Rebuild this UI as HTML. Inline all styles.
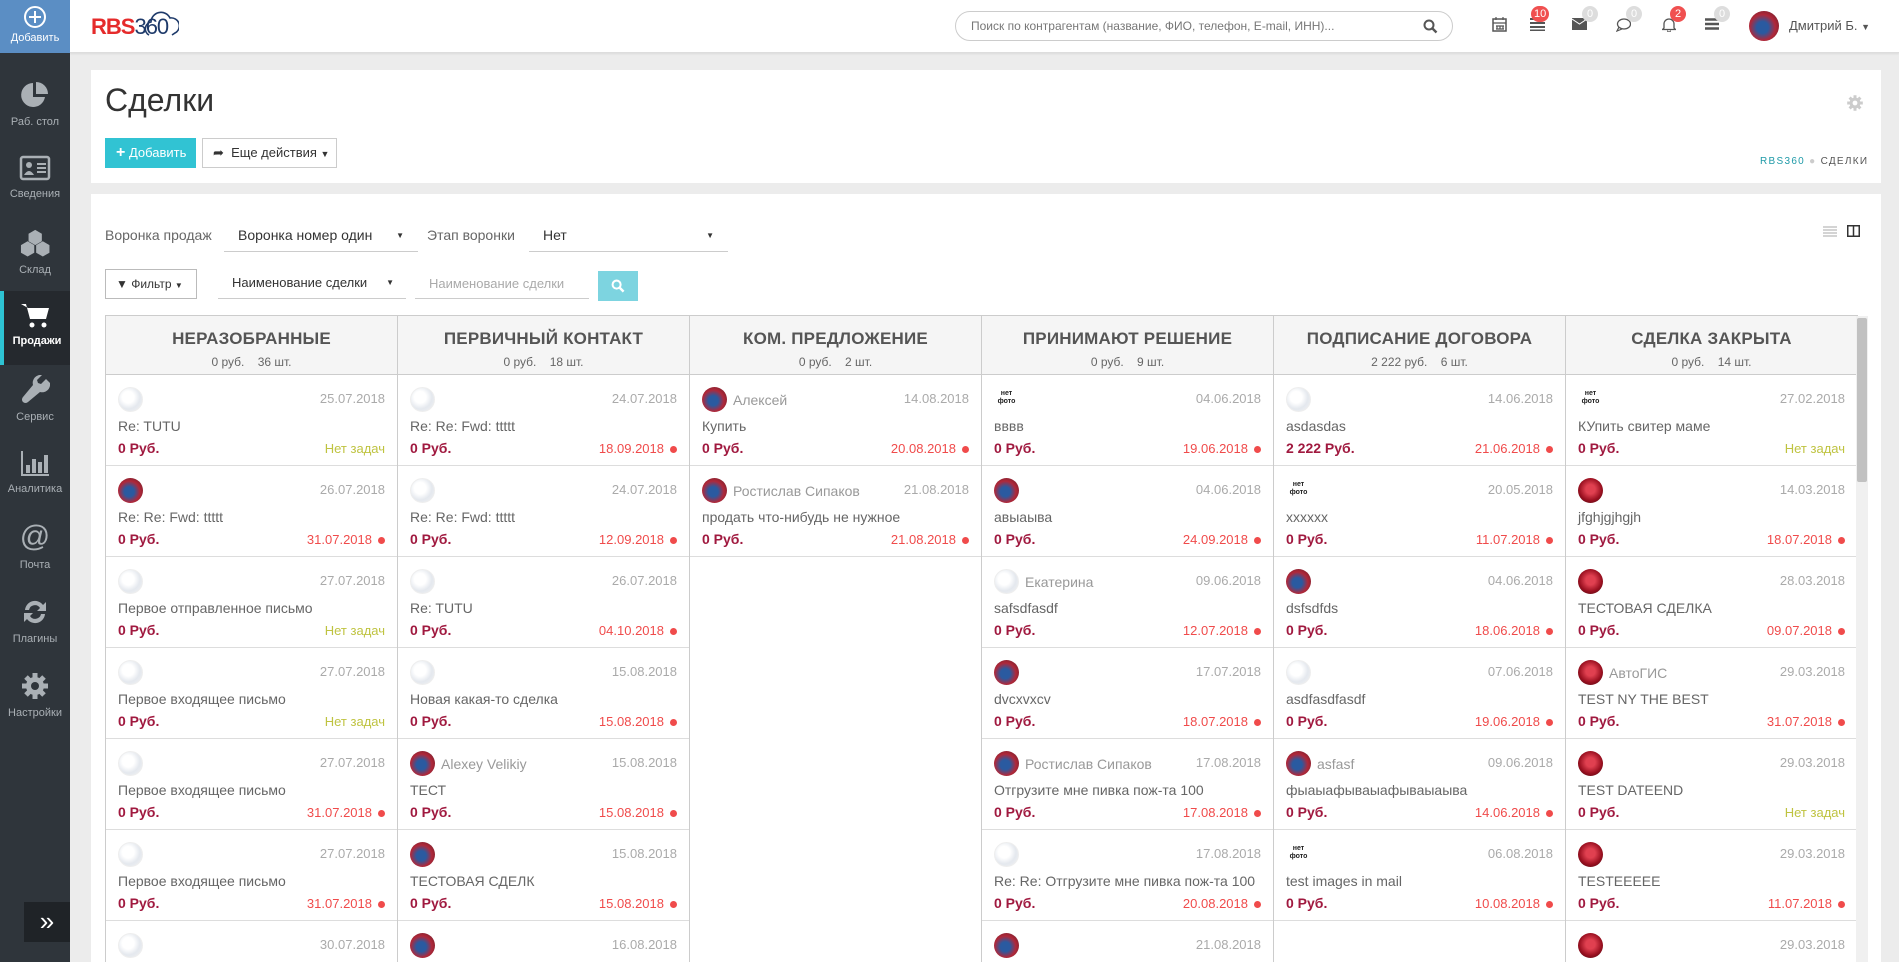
<!DOCTYPE html>
<html><head><meta charset="utf-8">
<style>
*{box-sizing:border-box;margin:0;padding:0}
html,body{width:1899px;height:962px;overflow:hidden}
body{background:#ececec;font-family:"Liberation Sans",sans-serif;color:#555;position:relative}
#wrap{position:absolute;left:0;top:0;width:1899px;height:962px;overflow:hidden}
.side{position:absolute;left:0;top:0;width:70px;height:962px;background:#2f353b;z-index:2}
.addb{position:absolute;left:0;top:0;width:70px;height:53px;background:#5b8ec4;color:#fff;text-align:center;font-size:11px}
.si{position:absolute;left:0;width:70px;height:74px;text-align:center;color:#aab0b5;font-size:11px}
.si svg{display:block;margin:10px auto 6px}
.si.act{background:#25292e;color:#fff;font-weight:bold;border-left:4px solid #2ec3d3}
.top{position:absolute;left:70px;top:0;right:0;height:53px;background:#fff;border-bottom:1px solid #ddd;box-shadow:0 1px 2px rgba(0,0,0,.08)}
.card1{position:absolute;left:91px;top:70px;width:1790px;height:113px;background:#fff}
.card2{position:absolute;left:91px;top:194px;width:1790px;height:768px;background:#fff}
.abs{position:absolute}
.btn{position:absolute;height:30px;font-size:13px;line-height:28px}
.col{position:absolute;top:315px;width:292px;height:647px;border-left:1px solid #ccc;overflow:hidden}
.hd{height:60px;background:#f5f5f5;border-bottom:1px solid #ccc;border-top:1px solid #ccc;text-align:center}
.hd b{display:block;font-size:17px;color:#555;padding-top:13px;letter-spacing:.2px}
.hd span{display:block;font-size:12px;color:#666;margin-top:6px}
.cd{position:relative;height:91px;border-bottom:1px solid #ddd}
.av{position:absolute;left:12px;top:12px;width:25px;height:25px;border-radius:50%}
.ph{background:radial-gradient(circle at 40% 40%,#fff 30%,#e4e8ee 60%,#f3f3f3);border:1px solid #eee}
.pho{background:radial-gradient(circle at 45% 55%,#2a5aa0 25%,#b0283a 55%,#5a1a22)}
.phr{background:radial-gradient(circle at 50% 45%,#e04050 25%,#9a1020 60%,#3a0a10)}
.nf{font-size:7px;font-weight:bold;color:#222;line-height:8px;text-align:center;padding-top:3px;border-radius:0}
.nm{position:absolute;left:43px;top:17px;font-size:14px;color:#999}
.dt{position:absolute;right:12px;top:16px;font-size:13px;color:#aaa}
.tt{position:absolute;left:12px;top:43px;font-size:14px;color:#666}
.pr{position:absolute;left:12px;top:65px;font-size:14px;color:#a0193f;font-weight:bold}
.st{position:absolute;right:12px;top:66px;font-size:13px;color:#f04b4b}
.st.red::after{content:"";display:inline-block;width:7px;height:7px;border-radius:50%;background:#f04b4b;margin-left:6px}
.st.nz{color:#bfc340}
.badge{position:absolute;top:6px;min-width:16px;height:16px;border-radius:8px;font-size:11px;color:#fff;text-align:center;line-height:16px;padding:0 3px}
</style></head><body><div id="wrap">

<div class="side">
 <div class="addb"><svg width="24" height="24" viewBox="0 0 24 24" style="margin-top:5px"><circle cx="12" cy="12" r="10" fill="none" stroke="#fff" stroke-width="2"/><path d="M12 6v12M6 12h12" stroke="#fff" stroke-width="2"/></svg><div>Добавить</div></div>
 <div class="si" style="top:70px"><svg width="30" height="30" viewBox="0 0 30 30"><path d="M13 3A12 12 0 1 0 25 17H13z" fill="#aab0b5"/><path d="M16 2v12h12A12 12 0 0 0 16 2z" fill="#aab0b5"/></svg>Раб. стол</div>
 <div class="si" style="top:144px"><svg width="32" height="28" viewBox="0 0 32 28"><rect x="2" y="3" width="28" height="22" rx="2" fill="none" stroke="#aab0b5" stroke-width="2.5"/><circle cx="10" cy="11" r="3" fill="#aab0b5"/><path d="M5 21q5-8 10 0z" fill="#aab0b5"/><path d="M18 10h9M18 14h9M18 18h9" stroke="#aab0b5" stroke-width="2"/></svg>Сведения</div>
 <div class="si" style="top:218px"><svg width="30" height="30" viewBox="0 0 30 30"><path d="M15 2l7 4v8l-7 4-7-4V6z M7 14l7 4v8l-7 4-7-4v-8z M23 14l7 4v8l-7 4-7-4v-8z" fill="#aab0b5" transform="scale(.95) translate(1,0)"/></svg>Склад</div>
 <div class="si act" style="top:291px"><svg width="30" height="28" viewBox="0 0 30 28" style="margin-left:16px"><path d="M1 3h5l4 15h16l3-11H8" fill="#fff"/><circle cx="12" cy="24" r="2.5" fill="#fff"/><circle cx="24" cy="24" r="2.5" fill="#fff"/></svg>Продажи</div>
 <div class="si" style="top:365px"><svg width="30" height="30" viewBox="0 0 30 30"><path d="M26 4l-5 5-3-1-1-3 5-5a8 8 0 0 0-9 10L3 22a3 3 0 0 0 5 5l12-10a8 8 0 0 0 10-9z" fill="#aab0b5"/></svg>Сервис</div>
 <div class="si" style="top:439px"><svg width="30" height="28" viewBox="0 0 30 28"><path d="M2 2v24h27" stroke="#aab0b5" stroke-width="2" fill="none"/><rect x="6" y="16" width="4" height="8" fill="#aab0b5"/><rect x="12" y="10" width="4" height="14" fill="#aab0b5"/><rect x="18" y="13" width="4" height="11" fill="#aab0b5"/><rect x="24" y="6" width="4" height="18" fill="#aab0b5"/></svg>Аналитика</div>
 <div class="si" style="top:513px"><div style="font-size:30px;color:#aab0b5;height:36px;margin-top:6px;line-height:36px">@</div><div style="margin-top:4px">Почта</div></div>
 <div class="si" style="top:587px"><svg width="30" height="30" viewBox="0 0 30 30"><path d="M5 13A10 10 0 0 1 23 8l3-3v9h-9l3-3A6 6 0 0 0 9 13z M25 17A10 10 0 0 1 7 22l-3 3v-9h9l-3 3a6 6 0 0 0 11-2z" fill="#aab0b5"/></svg>Плагины</div>
 <div class="si" style="top:661px"><svg width="30" height="30" viewBox="0 0 30 30"><circle cx="15" cy="15" r="9" fill="#aab0b5"/><g stroke="#aab0b5" stroke-width="5"><path d="M15 2v26M2 15h26M6 6l18 18M24 6L6 24"/></g><circle cx="15" cy="15" r="4" fill="#2f353b"/></svg>Настройки</div>
 <div class="abs" style="left:24px;top:902px;width:46px;height:40px;background:#1f2327;color:#fff;font-size:26px;text-align:center;line-height:38px">»</div>
</div>

<div class="top">
 <div class="abs" style="left:21px;top:14px;font-size:22px;font-weight:bold;color:#e52b2b;letter-spacing:-1px">RBS<span style="color:#1e3a6a;font-weight:normal">360</span></div>
 <svg class="abs" style="left:75px;top:9px" width="34" height="28" viewBox="0 0 34 28"><path d="M4 26A7 7 0 0 1 6 13a10 10 0 0 1 19-4 8 8 0 0 1 5 15l-3 2" fill="none" stroke="#1e3a6a" stroke-width="1.6"/></svg>
 <div class="abs" style="left:885px;top:11px;width:498px;height:30px;border:1px solid #ccc;border-radius:15px;font-size:12px;color:#777;padding:7px 15px">Поиск по контрагентам (название, ФИО, телефон, E-mail, ИНН)...<svg class="abs" style="right:14px;top:7px" width="15" height="15" viewBox="0 0 15 15"><circle cx="6" cy="6" r="4.5" fill="none" stroke="#555" stroke-width="2"/><path d="M9.5 9.5l4 4" stroke="#555" stroke-width="2.4"/></svg></div>
 <svg class="abs" style="left:1422px;top:17px" width="15" height="15" viewBox="0 0 15 15"><rect x="1" y="2" width="13" height="12" fill="none" stroke="#555" stroke-width="1.5"/><path d="M1 6h13M4 9h8M4 12h8M5 9v3M8 9v3M11 9v3M4 0v3M11 0v3" stroke="#555" stroke-width="1.2"/></svg>
 <svg class="abs" style="left:1460px;top:18px" width="15" height="13" viewBox="0 0 15 13"><path d="M0 1h15M0 5h15M0 9h15M0 12.5h15" stroke="#555" stroke-width="2"/></svg>
 <div class="badge" style="left:1461px;background:#f05050">10</div>
 <svg class="abs" style="left:1502px;top:18px" width="15" height="12" viewBox="0 0 15 12"><rect width="15" height="12" fill="#555"/><path d="M0 1l7.5 5L15 1" stroke="#fff" fill="none"/></svg>
 <div class="badge" style="left:1512px;background:#ddd">0</div>
 <svg class="abs" style="left:1546px;top:18px" width="15" height="14" viewBox="0 0 15 14"><ellipse cx="8" cy="6" rx="6.5" ry="5" fill="none" stroke="#555" stroke-width="1.3"/><path d="M3 9l-2 4 5-2" fill="none" stroke="#555" stroke-width="1.2"/></svg>
 <div class="badge" style="left:1556px;background:#ddd">0</div>
 <svg class="abs" style="left:1592px;top:17px" width="14" height="15" viewBox="0 0 14 15"><path d="M2 11V7a5 5 0 0 1 10 0v4l1.5 1.5h-13z" fill="none" stroke="#555" stroke-width="1.3"/><path d="M5.5 13.5a1.5 1.5 0 0 0 3 0" stroke="#555" fill="none"/></svg>
 <div class="badge" style="left:1600px;background:#f05050">2</div>
 <svg class="abs" style="left:1635px;top:18px" width="14" height="12" viewBox="0 0 14 12"><path d="M0 1.5h14M0 6h14M0 10.5h14" stroke="#555" stroke-width="2.5"/></svg>
 <div class="badge" style="left:1644px;background:#ddd">0</div>
 <div class="abs pho" style="left:1679px;top:11px;width:30px;height:30px;border-radius:50%"></div>
 <div class="abs" style="left:1719px;top:18px;font-size:13px;color:#555">Дмитрий Б. <span style="font-size:9px">▼</span></div>
</div>

<div class="card1">
 <div class="abs" style="left:14px;top:12px;font-size:32px;color:#333">Сделки</div>
 <div class="btn" style="left:14px;top:68px;width:91px;background:#31c3d3;color:#fff;padding-left:10px;border:1px solid #31c3d3"><b style="font-size:16px">+</b> Добавить</div>
 <div class="btn" style="left:111px;top:68px;width:135px;border:1px solid #ccc;color:#333;padding-left:10px">➦ &nbsp;Еще действия <span style="font-size:9px">▼</span></div>
 <svg class="abs" style="left:1755px;top:24px" width="18" height="18" viewBox="0 0 30 30"><circle cx="15" cy="15" r="9" fill="#ccc"/><g stroke="#ccc" stroke-width="5"><path d="M15 2v26M2 15h26M6 6l18 18M24 6L6 24"/></g><circle cx="15" cy="15" r="4" fill="#fff"/></svg>
 <div class="abs" style="left:1669px;top:86px;font-size:10px;letter-spacing:1.3px;color:#1f9aa8">RBS360 <span style="color:#ccc">●</span> <span style="color:#555">СДЕЛКИ</span></div>
</div>

<div class="card2">
 <div class="abs" style="left:14px;top:33px;font-size:14px;color:#666">Воронка продаж</div>
 <div class="abs" style="left:133px;top:26px;width:194px;height:32px;border-bottom:1px solid #ccc;font-size:14px;color:#333;padding:7px 14px">Воронка номер один<span style="position:absolute;right:14px;font-size:8px;top:11px">▼</span></div>
 <div class="abs" style="left:336px;top:33px;font-size:14px;color:#666">Этап воронки</div>
 <div class="abs" style="left:438px;top:26px;width:199px;height:32px;border-bottom:1px solid #ccc;font-size:14px;color:#333;padding:7px 14px">Нет<span style="position:absolute;right:14px;font-size:8px;top:11px">▼</span></div>
 <svg class="abs" style="left:1732px;top:32px" width="14" height="11" viewBox="0 0 14 11"><path d="M0 1h14M0 4h14M0 7h14M0 10h14" stroke="#aaa" stroke-width="1"/></svg>
 <svg class="abs" style="left:1756px;top:31px" width="13" height="12" viewBox="0 0 13 12"><rect x=".75" y=".75" width="11.5" height="10.5" fill="none" stroke="#333" stroke-width="1.5"/><path d="M6.5 1v10" stroke="#333" stroke-width="1.5"/></svg>
 <div class="btn" style="left:14px;top:75px;width:92px;border:1px solid #bbb;font-size:12px;color:#333;padding-left:10px"><b>▼</b> Фильтр <span style="font-size:8px">▼</span></div>
 <div class="abs" style="left:127px;top:74px;width:188px;height:31px;border-bottom:1px solid #ccc;font-size:13px;color:#333;padding:7px 14px">Наименование сделки<span style="position:absolute;right:12px;font-size:8px;top:10px">▼</span></div>
 <div class="abs" style="left:324px;top:74px;width:174px;height:31px;border-bottom:1px solid #ccc;font-size:13px;color:#aaa;padding:8px 14px">Наименование сделки</div>
 <div class="abs" style="left:507px;top:77px;width:40px;height:30px;background:#7dd4e0"><svg style="margin:8px 13px" width="14" height="14" viewBox="0 0 15 15"><circle cx="6" cy="6" r="4.3" fill="none" stroke="#fff" stroke-width="2.2"/><path d="M9.5 9.5l4 4" stroke="#fff" stroke-width="2.6"/></svg></div>
</div>

<div id="board"></div>
<div class="abs" style="left:1856px;top:316px;width:12px;height:646px;background:#f0f0f0"></div>
<div class="abs" style="left:1857px;top:318px;width:10px;height:164px;background:#c1c1c1;border-radius:2px"></div>
</div>
<script>
var P='ph',O='pho',R='phr',N='nf';
var cols=[
["НЕРАЗОБРАННЫЕ","0 руб.&nbsp;&nbsp;&nbsp; 36 шт.",[
[P,"","25.07.2018","Re: TUTU","0 Руб.","n"],
[O,"","26.07.2018","Re: Re: Fwd: ttttt","0 Руб.","31.07.2018"],
[P,"","27.07.2018","Первое отправленное письмо","0 Руб.","n"],
[P,"","27.07.2018","Первое входящее письмо","0 Руб.","n"],
[P,"","27.07.2018","Первое входящее письмо","0 Руб.","31.07.2018"],
[P,"","27.07.2018","Первое входящее письмо","0 Руб.","31.07.2018"],
[P,"","30.07.2018","","",""]]],
["ПЕРВИЧНЫЙ КОНТАКТ","0 руб.&nbsp;&nbsp;&nbsp; 18 шт.",[
[P,"","24.07.2018","Re: Re: Fwd: ttttt","0 Руб.","18.09.2018"],
[P,"","24.07.2018","Re: Re: Fwd: ttttt","0 Руб.","12.09.2018"],
[P,"","26.07.2018","Re: TUTU","0 Руб.","04.10.2018"],
[P,"","15.08.2018","Новая какая-то сделка","0 Руб.","15.08.2018"],
[O,"Alexey Velikiy","15.08.2018","ТЕСТ","0 Руб.","15.08.2018"],
[O,"","15.08.2018","ТЕСТОВАЯ СДЕЛК","0 Руб.","15.08.2018"],
[O,"","16.08.2018","","",""]]],
["КОМ. ПРЕДЛОЖЕНИЕ","0 руб.&nbsp;&nbsp;&nbsp; 2 шт.",[
[O,"Алексей","14.08.2018","Купить","0 Руб.","20.08.2018"],
[O,"Ростислав Сипаков","21.08.2018","продать что-нибудь не нужное","0 Руб.","21.08.2018"]]],
["ПРИНИМАЮТ РЕШЕНИЕ","0 руб.&nbsp;&nbsp;&nbsp; 9 шт.",[
[N,"","04.06.2018","вввв","0 Руб.","19.06.2018"],
[O,"","04.06.2018","авыаыва","0 Руб.","24.09.2018"],
[P,"Екатерина","09.06.2018","safsdfasdf","0 Руб.","12.07.2018"],
[O,"","17.07.2018","dvcxvxcv","0 Руб.","18.07.2018"],
[O,"Ростислав Сипаков","17.08.2018","Отгрузите мне пивка пож-та 100","0 Руб.","17.08.2018"],
[P,"","17.08.2018","Re: Re: Отгрузите мне пивка пож-та 100","0 Руб.","20.08.2018"],
[O,"","21.08.2018","","",""]]],
["ПОДПИСАНИЕ ДОГОВОРА","2 222 руб.&nbsp;&nbsp;&nbsp; 6 шт.",[
[P,"","14.06.2018","asdasdas","2 222 Руб.","21.06.2018"],
[N,"","20.05.2018","xxxxxx","0 Руб.","11.07.2018"],
[O,"","04.06.2018","dsfsdfds","0 Руб.","18.06.2018"],
[P,"","07.06.2018","asdfasdfasdf","0 Руб.","19.06.2018"],
[O,"asfasf","09.06.2018","фыаыафываыафываыаыва","0 Руб.","14.06.2018"],
[N,"","06.08.2018","test images in mail","0 Руб.","10.08.2018"]]],
["СДЕЛКА ЗАКРЫТА","0 руб.&nbsp;&nbsp;&nbsp; 14 шт.",[
[N,"","27.02.2018","КУпить свитер маме","0 Руб.","n"],
[R,"","14.03.2018","jfghjgjhgjh","0 Руб.","18.07.2018"],
[R,"","28.03.2018","ТЕСТОВАЯ СДЕЛКА","0 Руб.","09.07.2018"],
[R,"АвтоГИС","29.03.2018","TEST NY THE BEST","0 Руб.","31.07.2018"],
[R,"","29.03.2018","TEST DATEEND","0 Руб.","n"],
[R,"","29.03.2018","TESTEEEEE","0 Руб.","11.07.2018"],
[R,"","29.03.2018","","",""]]]];
var h='';
cols.forEach(function(c,i){
 h+='<div class="col" style="left:'+(105+i*292)+'px;'+(i==5?'border-right:1px solid #ccc;width:293px':'')+'"><div class="hd"><b>'+c[0]+'</b><span>'+c[1]+'</span></div>';
 c[2].forEach(function(d){
  var av=d[0]==N?'<div class="av nf">нет<br>фото</div>':'<div class="av '+d[0]+'"></div>';
  h+='<div class="cd">'+av+(d[1]?'<div class="nm">'+d[1]+'</div>':'')+'<div class="dt">'+d[2]+'</div>';
  if(d[3]){h+='<div class="tt">'+d[3]+'</div><div class="pr">'+d[4]+'</div>';
   h+=d[5]=='n'?'<div class="st nz">Нет задач</div>':'<div class="st red">'+d[5]+'</div>';}
  h+='</div>';
 });
 h+='</div>';
});
document.getElementById('board').innerHTML=h;
</script>
</body></html>
